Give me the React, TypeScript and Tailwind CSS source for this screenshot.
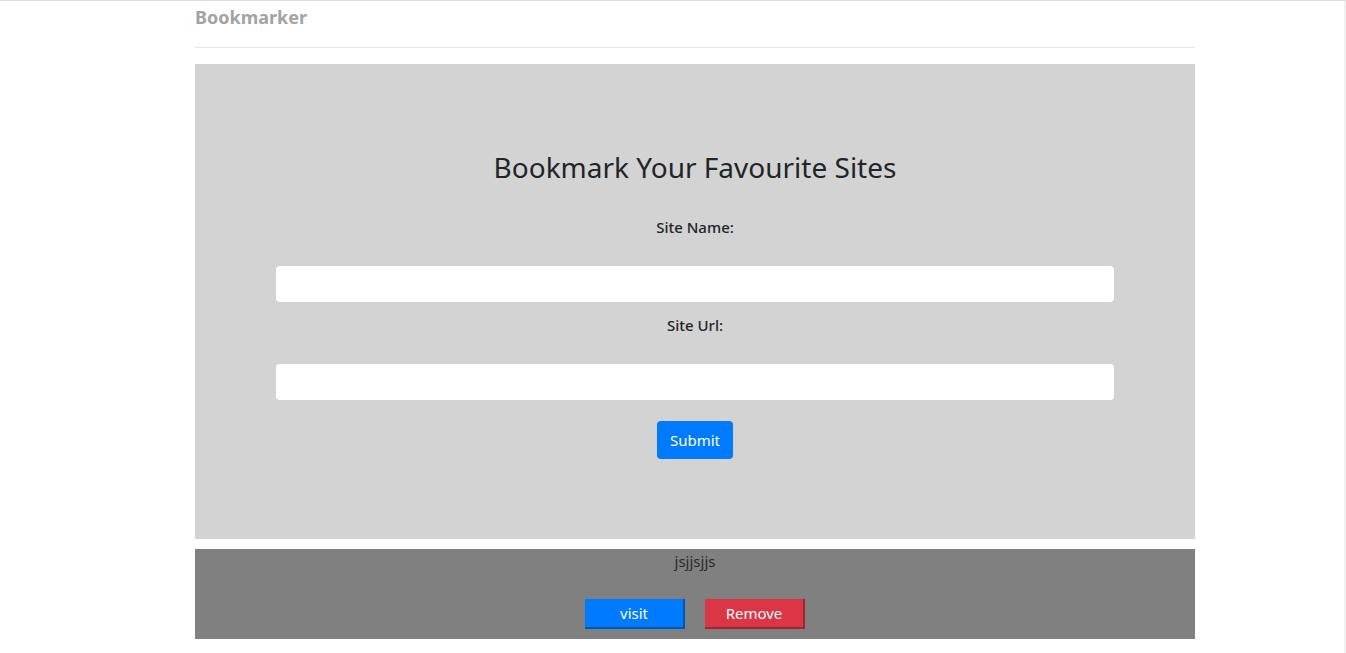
export default function App() {
  return (
    <div
      className="min-h-[653px] w-full bg-white text-[#212529] border-t border-[#dddddd]"
      style={{ fontFamily: '"Noto Sans", "Open Sans", Arial, sans-serif' }}
    >
      <div className="flex">
        <div className="flex-1">
          <div className="ml-[195px] w-[1000px]">
            <div className="h-[46px] pt-[4px]">
              <span className="text-[18px] font-bold text-[#a3a3a3] leading-[24px]">Bookmarker</span>
            </div>
            <div className="h-px bg-[#e5e5e5]" />
            <div className="mt-[16px] h-[475px] bg-[#d3d3d3] flex flex-col items-center pt-[83px]">
              <h1 className="text-[28px] leading-[40px] font-normal text-[#212529]">Bookmark Your Favourite Sites</h1>
              <label className="mt-[28px] text-[15px] font-medium leading-[24px]">Site Name:</label>
              <input className="mt-[27px] w-[838px] h-[36px] bg-white rounded-[4px] outline-none" />
              <label className="mt-[11px] text-[15px] font-medium leading-[24px]">Site Url:</label>
              <input className="mt-[27px] w-[838px] h-[36px] bg-white rounded-[4px] outline-none" />
              <button className="mt-[21px] w-[76px] h-[38px] bg-[#007bff] text-white text-[15px] rounded-[4px]">
                Submit
              </button>
            </div>
            <div className="mt-[10px] h-[90px] bg-[#808080] flex flex-col items-center">
              <div className="text-[15px] leading-[24px] text-[#2b2b2b]">jsjjsjjs</div>
              <div className="mt-[26px] flex gap-[20px]">
                <button className="w-[100px] h-[30px] bg-[#007bff] border-r-2 border-b-2 border-[#0058b8] text-white text-[15px] leading-[26px]">
                  visit
                </button>
                <button className="w-[100px] h-[30px] bg-[#dc3545] border-r-2 border-b-2 border-[#9e2631] text-white text-[15px] leading-[26px]">
                  Remove
                </button>
              </div>
            </div>
          </div>
        </div>
        <div className="w-[2px] bg-[#f0f0f0] min-h-[652px]" />
      </div>
    </div>
  );
}
